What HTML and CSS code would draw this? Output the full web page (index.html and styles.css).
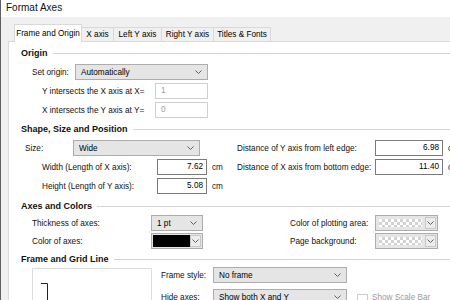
FILE: index.html
```html
<!DOCTYPE html>
<html>
<head>
<meta charset="utf-8">
<link rel="stylesheet" href="styles.css">
</head>
<body>
<div class="window">
  <div class="titlebar">Format Axes</div>
  <div class="dialog">
    <div class="tabs">
      <div class="tab active t1">Frame and Origin</div>
      <div class="tab t2">X axis</div>
      <div class="tab t3">Left Y axis</div>
      <div class="tab t4">Right Y axis</div>
      <div class="tab t5">Titles &amp; Fonts</div>
    </div>
    <div class="panel">
      <div class="group-head h-origin"><span>Origin</span></div>
      <div class="row mt5 ind11">
        <span class="lbl w43">Set origin:</span>
        <div class="select w133"><span>Automatically</span><svg class="chev" width="7" height="4" viewBox="0 0 7 4"><path d="M0.5 0.5 L3.5 3.5 L6.5 0.5" fill="none" stroke="#606060" stroke-width="1"/></svg></div>
      </div>
      <div class="row mt3 ind21">
        <span class="lbl w113">Y intersects the X axis at X=</span>
        <div class="input dis w53">1</div>
      </div>
      <div class="row mt3 ind21">
        <span class="lbl w113">X intersects the Y axis at Y=</span>
        <div class="input dis w53">0</div>
      </div>

      <div class="group-head mt5"><span>Shape, Size and Position</span></div>
      <div class="cols">
        <div class="col cw216">
          <div class="row mt5 ind4">
            <span class="lbl w48">Size:</span>
            <div class="select w127"><span>Wide</span><svg class="chev" width="7" height="4" viewBox="0 0 7 4"><path d="M0.5 0.5 L3.5 3.5 L6.5 0.5" fill="none" stroke="#606060" stroke-width="1"/></svg></div>
          </div>
          <div class="row mt3 ind21">
            <span class="lbl w115">Width (Length of X axis):</span>
            <div class="input w50">7.62</div>
            <span class="unit">cm</span>
          </div>
          <div class="row mt3 ind21">
            <span class="lbl w115">Height (Length of Y axis):</span>
            <div class="input w50">5.08</div>
            <span class="unit">cm</span>
          </div>
        </div>
        <div class="col">
          <div class="row mt5">
            <span class="lbl w138">Distance of Y axis from left edge:</span>
            <div class="input w68">6.98</div>
            <span class="unit">cm</span>
          </div>
          <div class="row mt3">
            <span class="lbl w138">Distance of X axis from bottom edge:</span>
            <div class="input w68">11.40</div>
            <span class="unit">cm</span>
          </div>
        </div>
      </div>

      <div class="group-head mt6"><span>Axes and Colors</span></div>
      <div class="cols">
        <div class="col cw269">
          <div class="row mt3 ind11">
            <span class="lbl w119">Thickness of axes:</span>
            <div class="select w52"><span>1 pt</span><svg class="chev" width="7" height="4" viewBox="0 0 7 4"><path d="M0.5 0.5 L3.5 3.5 L6.5 0.5" fill="none" stroke="#606060" stroke-width="1"/></svg></div>
          </div>
          <div class="row mt2 ind11">
            <span class="lbl w119">Color of axes:</span>
            <div class="colorsel w52">
              <div class="swatch black"></div>
              <div class="dropbtn"><svg width="7" height="4" viewBox="0 0 7 4"><path d="M0.5 0.5 L3.5 3.5 L6.5 0.5" fill="none" stroke="#606060" stroke-width="1"/></svg></div>
            </div>
          </div>
        </div>
        <div class="col">
          <div class="row mt3">
            <span class="lbl w85">Color of plotting area:</span>
            <div class="colorsel w63">
              <div class="swatch checker"></div>
              <div class="dropbtn"><svg width="7" height="4" viewBox="0 0 7 4"><path d="M0.5 0.5 L3.5 3.5 L6.5 0.5" fill="none" stroke="#606060" stroke-width="1"/></svg></div>
            </div>
          </div>
          <div class="row mt2">
            <span class="lbl w85">Page background:</span>
            <div class="colorsel w63">
              <div class="swatch checker"></div>
              <div class="dropbtn"><svg width="7" height="4" viewBox="0 0 7 4"><path d="M0.5 0.5 L3.5 3.5 L6.5 0.5" fill="none" stroke="#606060" stroke-width="1"/></svg></div>
            </div>
          </div>
        </div>
      </div>

      <div class="group-head mt4"><span>Frame and Grid Line</span></div>
      <div class="frame-sec">
        <div class="preview">
          <svg width="8" height="30" viewBox="0 0 8 30"><path d="M0 0.5 H6.5 V30" fill="none" stroke="#222" stroke-width="1"/></svg>
        </div>
        <div class="col frame-right">
          <div class="row mt2">
            <span class="lbl w52">Frame style:</span>
            <div class="select w134"><span>No frame</span><svg class="chev" width="7" height="4" viewBox="0 0 7 4"><path d="M0.5 0.5 L3.5 3.5 L6.5 0.5" fill="none" stroke="#606060" stroke-width="1"/></svg></div>
          </div>
          <div class="row mt6">
            <span class="lbl w52">Hide axes:</span>
            <div class="select w134"><span>Show both X and Y</span><svg class="chev" width="7" height="4" viewBox="0 0 7 4"><path d="M0.5 0.5 L3.5 3.5 L6.5 0.5" fill="none" stroke="#606060" stroke-width="1"/></svg></div>
            <span class="checkbox"></span>
            <span class="cb-label">Show Scale Bar</span>
          </div>
        </div>
      </div>
    </div>
  </div>
</div>
</body>
</html>
```

FILE: styles.css
```css
html, body {
  margin: 0;
  padding: 0;
  width: 450px;
  height: 300px;
  overflow: hidden;
  background: #fff;
}
body {
  font-family: "Liberation Sans", Arial, sans-serif;
  font-size: 8.2px;
  color: #000;
}
.window {
  border-left: 1px solid #5f5f5f;
  height: 300px;
  box-sizing: border-box;
}
.titlebar {
  height: 17px;
  padding-left: 5px;
  font-size: 10px;
  line-height: 16px;
  color: #111;
  background: #fff;
}
.dialog {
  background: #f0f0f0;
  padding-left: 7px;
  height: 283px;
}
.tabs {
  height: 24px;
  display: flex;
  align-items: flex-end;
  padding-left: 6px;
}
.tab {
  flex: none;
  box-sizing: border-box;
  height: 14px;
  border: 1px solid #d9d9d9;
  border-bottom: none;
  margin-left: -1px;
  line-height: 13px;
  text-align: center;
  background: #f0f0f0;
  white-space: nowrap;
  overflow: hidden;
}
.tab.active {
  height: 18px;
  margin-bottom: -1px;
  background: #fff;
  position: relative;
  z-index: 1;
  line-height: 17px;
  margin-left: 0;
}
.t1 { width: 68px; }
.t2 { width: 33px; }
.t3 { width: 49px; }
.t4 { width: 53px; }
.t5 { width: 58px; }
.panel {
  background: #fff;
  border-top: 1px solid #d9d9d9;
  border-left: 1px solid #d9d9d9;
  padding-left: 12px;
  height: 260px;
}
.group-head {
  display: flex;
  align-items: center;
  height: 12px;
  font-weight: bold;
  font-size: 9px;
  color: #111;
}
.group-head::after {
  content: "";
  flex: 1;
  height: 1px;
  background: #d5d5d5;
  margin-left: 5px;
}
.h-origin { padding-top: 5px; }
.row {
  display: flex;
  align-items: center;
  height: 16px;
  white-space: nowrap;
}
.mt2 { margin-top: 2px; }
.mt3 { margin-top: 3px; }
.mt4 { margin-top: 4px; }
.mt5 { margin-top: 5px; }
.mt6 { margin-top: 6px; }
.ind4 { padding-left: 4px; }
.ind11 { padding-left: 11px; }
.ind21 { padding-left: 21px; }
.lbl { flex: none; color: #111; }
.w43 { width: 43px; }
.w48 { width: 48px; }
.w52 { width: 52px; }
.w85 { width: 85px; }
.w113 { width: 113px; }
.w115 { width: 115px; }
.w119 { width: 119px; }
.w138 { width: 138px; }
.select, .input, .colorsel { flex: none; box-sizing: border-box; height: 16px; }
.select.w133 { width: 133px; }
.select.w127 { width: 127px; }
.select.w52 { width: 52px; }
.select.w134 { width: 134px; }
.input.w53 { width: 53px; }
.input.w50 { width: 50px; }
.input.w68 { width: 68px; }
.colorsel.w52 { width: 52px; }
.colorsel.w63 { width: 63px; }
.select {
  display: flex;
  align-items: center;
  justify-content: space-between;
  border: 1px solid #adadad;
  background: #e5e5e5;
  padding-left: 5px;
  padding-right: 5px;
}
.input {
  border: 1px solid #7a7a7a;
  background: #fff;
  padding: 0 3px;
  text-align: right;
  line-height: 14px;
}
.input.dis {
  border-color: #cfcfcf;
  color: #9a9a9a;
  text-align: left;
  padding-left: 5px;
}
.unit { margin-left: 5px; color: #111; }
.cols { display: flex; }
.col { display: flex; flex-direction: column; flex: none; }
.cw216 { width: 216px; }
.cw269 { width: 269px; }
.colorsel {
  display: flex;
  border: 1px solid #adadad;
  background: #e5e5e5;
  padding: 1px;
}
.swatch { flex: 1; }
.swatch.black { background: #000; }
.swatch.checker {
  background: #fff conic-gradient(#d2d2d2 25%, #fff 0 50%, #d2d2d2 0 75%, #fff 0) 0 0 / 6px 6px;
  margin: 2px 3px 2px 2px;
}
.dropbtn {
  width: 11px;
  box-sizing: border-box;
  border: 1px solid #c8c8c8;
  background: #ececec;
  display: flex;
  align-items: center;
  justify-content: center;
}
.frame-sec { display: flex; }
.preview {
  flex: none;
  box-sizing: border-box;
  width: 120px;
  height: 45px;
  margin-left: 11px;
  margin-top: 3px;
  border: 1px solid #dcdcdc;
  background: #fff;
  padding-left: 8px;
  padding-top: 14px;
}
.preview svg { display: block; }
.frame-right { margin-left: 9px; }
.checkbox {
  flex: none;
  width: 11px;
  height: 11px;
  box-sizing: border-box;
  border: 1px solid #cccccc;
  background: #fff;
  margin-left: 10px;
  margin-top: 4px;
}
.cb-label { margin-left: 4px; color: #9a9a9a; }
```
